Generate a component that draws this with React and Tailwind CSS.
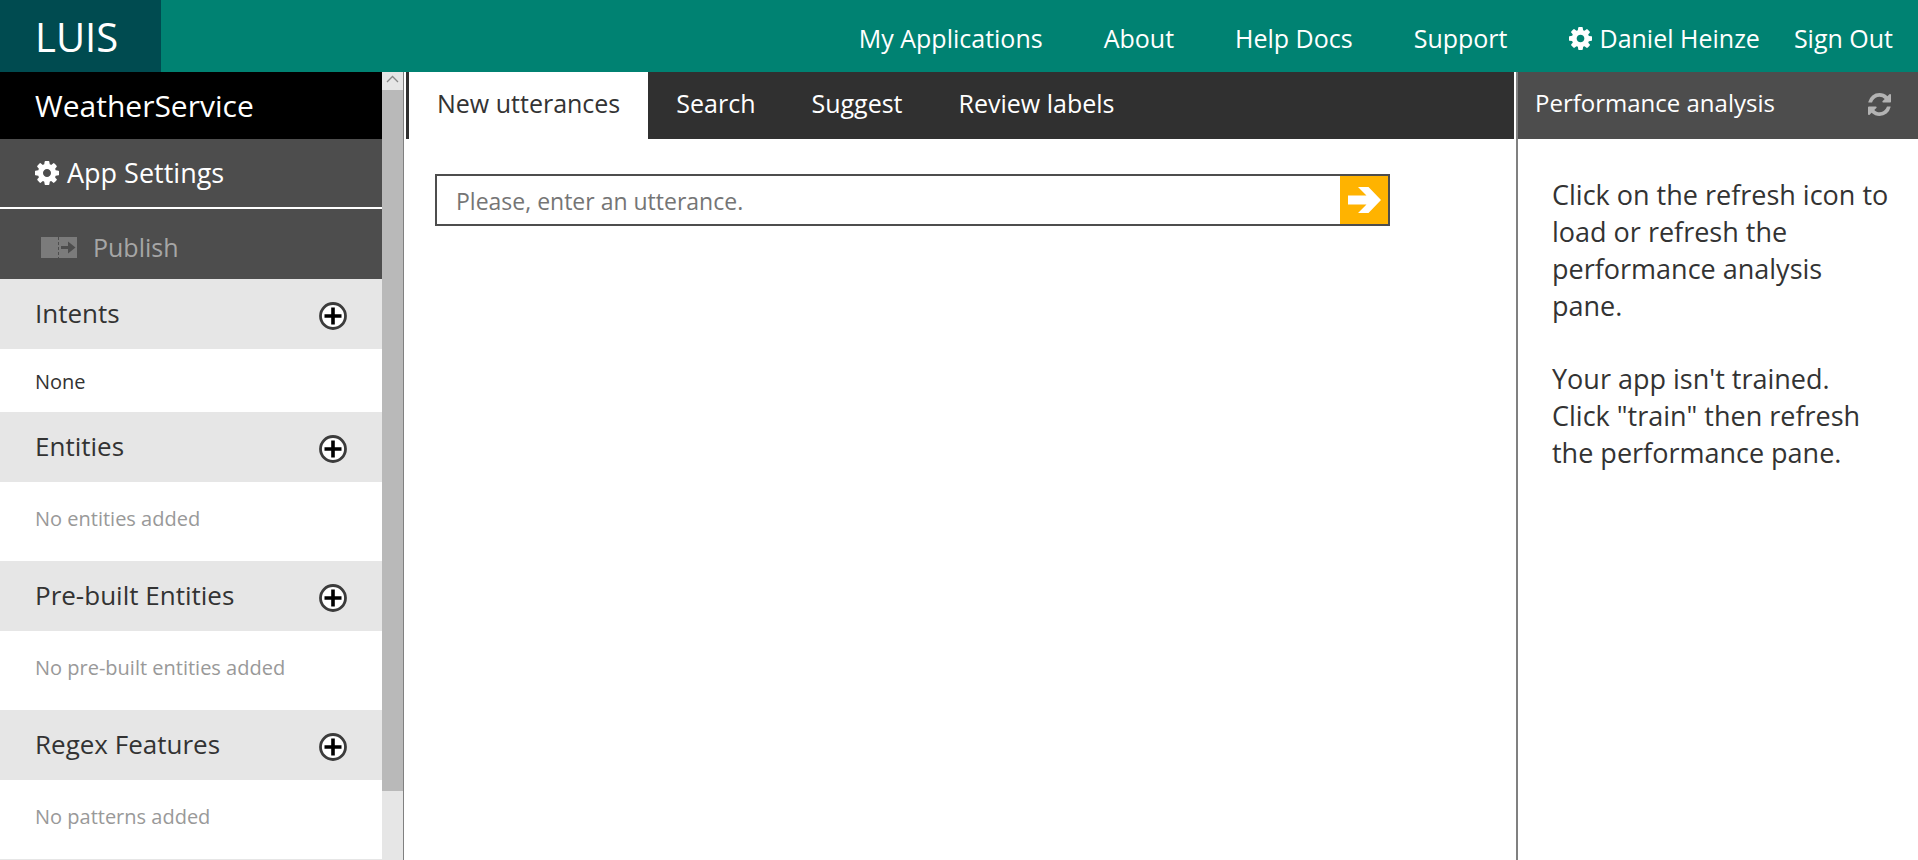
const GEAR =
  "M1152 896q0-106-75-181t-181-75-181 75-75 181 75 181 181 75 181-75 75-181zm512-109v222q0 12-8 23t-20 13l-185 28q-19 54-39 91 35 50 107 138 10 12 10 25t-9 23q-27 37-99 108t-94 71q-12 0-26-9l-138-108q-44 23-91 38-16 136-29 186-7 28-36 28h-222q-14 0-24.5-8.5t-11.5-21.5l-28-184q-49-16-90-37l-141 107q-10 9-25 9-14 0-25-11-126-114-165-168-7-10-7-23 0-12 8-23 15-21 51-66.5t54-70.5q-27-50-41-99l-183-27q-13-2-21-12.5t-8-23.5v-222q0-12 8-23t19-13l186-28q14-46 39-92-40-57-107-138-10-12-10-24 0-10 9-23 26-36 98.5-107.5t94.5-71.5q13 0 26 10l138 107q44-23 91-38 16-136 29-186 7-28 36-28h222q14 0 24.5 8.5t11.5 21.5l28 184q49 16 90 37l142-107q9-9 24-9 13 0 25 10 129 119 165 170 7 8 7 22 0 12-8 23-15 21-51 66.5t-54 70.5q26 50 41 98l183 28q13 2 21 12.5t8 23.5z";

const REFRESH =
  "M1639 1056q0 5-1 7-64 268-268 434.5t-478 166.5q-146 0-282.5-55t-243.5-157l-129 129q-19 19-45 19t-45-19-19-45v-448q0-26 19-45t45-19h448q26 0 45 19t19 45-19 45l-137 137q71 66 161 102t187 36q134 0 250-65t186-179q11-17 53-117 8-23 30-23h192q13 0 22.5 9.5t9.5 22.5zm25-800v448q0 26-19 45t-45 19h-448q-26 0-45-19t-19-45 19-45l138-138q-148-137-349-137-134 0-250 65t-186 179q-11 17-53 117-8 23-30 23h-199q-13 0-22.5-9.5t-9.5-22.5v-7q65-268 270-434.5t480-166.5q146 0 284 55.5t245 156.5l130-129q19-19 45-19t45 19 19 45z";

function Glyph({ d, className }) {
  return (
    <svg viewBox="128 128 1536 1536" className={className} fill="currentColor" aria-hidden="true">
      <path d={d} />
    </svg>
  );
}

function PublishIcon() {
  return (
    <svg viewBox="0 0 36 21" className="h-[21px] w-9" aria-hidden="true">
      <rect width="36" height="21" fill="#7b7b7b" />
      <path d="M17.500 0V21" stroke="#4d4d4d" strokeWidth="1" strokeDasharray="3 2" />
      <path d="M20 9h7V4.500L34.500 10.500L27 16.500V12H20z" fill="#4d4d4d" />
    </svg>
  );
}

function PlusIcon() {
  return (
    <svg viewBox="0 0 28 28" className="size-7" aria-hidden="true">
      <circle cx="14" cy="14" r="12.500" fill="#fff" stroke="#3c3c3c" strokeWidth="2.800" />
      <path d="M14 5.500V22.500M5.500 14H22.500" stroke="#000" strokeWidth="3.600" />
    </svg>
  );
}

function ArrowIcon() {
  return (
    <svg viewBox="0 0 33 26" className="h-[26px] w-[33px]" aria-hidden="true">
      <path d="M0 8.500H18.500L10 0H20.500L33 13L20.500 26H10L18.500 17.500H0z" fill="#fff" />
    </svg>
  );
}

function Section({ title, children }) {
  return (
    <section className="shrink-0">
      <div className="flex h-[70px] items-center justify-between bg-[#e6e6e6] px-[35px]">
        <h2 className="pb-0.5 text-[26px] leading-9">{title}</h2>
        <button type="button" className="pt-1" aria-label={"Add to " + title}>
          <PlusIcon />
        </button>
      </div>
      {children}
    </section>
  );
}

const EMPTY_SECTIONS = [
  { title: "Entities", note: "No entities added" },
  { title: "Pre-built Entities", note: "No pre-built entities added" },
  { title: "Regex Features", note: "No patterns added" },
];

export default function App() {
  return (
    <div className="flex h-screen flex-col overflow-hidden bg-white font-['Open_Sans','Noto_Sans',sans-serif] text-[#333]">
      <header className="flex h-[72px] shrink-0 bg-[#008272] text-white">
        <a href="#home" className="flex w-[161px] items-center bg-[#004b50] pl-[35px] pt-0.5 text-[40px] leading-[70px]">
          LUIS
        </a>
        <nav className="ml-auto flex items-center gap-[61px] pr-[25px] pt-1 text-[25px] leading-8">
          <a href="#apps">My Applications</a>
          <a href="#about">About</a>
          <a href="#docs">Help Docs</a>
          <a href="#support">Support</a>
          <div className="flex items-center gap-[34px]">
            <a href="#account" className="flex items-center gap-2">
              <Glyph d={GEAR} className="size-[23px]" />
              Daniel Heinze
            </a>
            <a href="#signout">Sign Out</a>
          </div>
        </nav>
      </header>

      <div className="flex min-h-0 flex-1">
        <aside className="flex w-[404px] shrink-0 border-r border-[#808080]">
          <div className="flex min-w-0 flex-1 flex-col overflow-hidden">
            <h1 className="flex h-[67px] shrink-0 items-center bg-black pl-[35px] text-[30px] leading-9 text-white">
              WeatherService
            </h1>
            <button type="button" className="flex h-[68px] shrink-0 items-center gap-2 bg-[#4d4d4d] pl-[35px] text-[27px] leading-9 text-white">
              <Glyph d={GEAR} className="size-6" />
              App Settings
            </button>
            <button type="button" disabled className="mt-0.5 flex h-[70px] shrink-0 items-center gap-4 bg-[#4d4d4d] pl-[41px] pt-1.5 text-[25px] leading-9 text-[#a6a6a6]">
              <PublishIcon />
              Publish
            </button>
            <Section title="Intents">
              <a href="#none" className="flex h-[63px] items-center pl-[35px] pt-0.5 text-[20px] leading-7">
                None
              </a>
            </Section>
            {EMPTY_SECTIONS.map((s) => (
              <Section key={s.title} title={s.title}>
                <p className="flex h-[79px] items-center pb-1.5 pl-[35px] text-[20px] leading-7 text-[#999]">{s.note}</p>
              </Section>
            ))}
            <div className="h-[70px] shrink-0 bg-[#e6e6e6]" />
          </div>
          <div className="flex w-[21px] shrink-0 flex-col bg-[#e6e6e6]" aria-hidden="true">
            <svg viewBox="0 0 21 18" className="h-[18px] w-[21px] shrink-0">
              <path d="M5 10L10.500 4.500L16 10" fill="none" stroke="#888" strokeWidth="1.300" />
            </svg>
            <div className="h-[89%] bg-[#b9b9b9]" />
          </div>
        </aside>

        <main className="flex min-w-0 flex-1 flex-col px-0.5">
          <div role="tablist" className="flex h-[67px] shrink-0 border-l-[3px] border-[#303030] bg-[#303030] text-[25px] leading-[62px] text-white">
            <button type="button" role="tab" aria-selected="true" className="bg-white px-7 pb-[5px] text-[#333]">
              New utterances
            </button>
            <button type="button" role="tab" aria-selected="false" className="px-7 pb-[5px]">
              Search
            </button>
            <button type="button" role="tab" aria-selected="false" className="px-7 pb-[5px]">
              Suggest
            </button>
            <button type="button" role="tab" aria-selected="false" className="px-7 pb-[5px]">
              Review labels
            </button>
          </div>
          <form className="ml-[29px] mr-[124px] mt-[35px] flex h-[52px] border-2 border-[#4d4d4d]">
            <input
              type="text"
              aria-label="Utterance"
              placeholder="Please, enter an utterance."
              className="min-w-0 flex-1 px-[19px] pt-0.5 text-[23px] outline-none placeholder:text-[#757575]"
            />
            <button type="button" aria-label="Submit utterance" className="flex w-12 items-center justify-center bg-[#ffb300]">
              <ArrowIcon />
            </button>
          </form>
        </main>

        <aside className="flex w-[402px] shrink-0 flex-col border-l-2 border-[#808080]">
          <div className="flex h-[67px] shrink-0 items-center justify-between bg-[#4d4d4d] pb-[3px] pl-[17px] pr-[27px] text-white">
            <h2 className="pb-0.5 text-[24px] leading-9">Performance analysis</h2>
            <button type="button" aria-label="Refresh performance analysis" className="text-[#b3b3b3]">
              <Glyph d={REFRESH} className="size-[23px]" />
            </button>
          </div>
          <div className="flex flex-col gap-9 pl-[34px] pr-6 pt-[37px] text-[27px] leading-[37px]">
            <p>Click on the refresh icon to load or refresh the performance analysis pane.</p>
            <p>Your app isn't trained. Click "train" then refresh the performance pane.</p>
          </div>
        </aside>
      </div>
    </div>
  );
}
